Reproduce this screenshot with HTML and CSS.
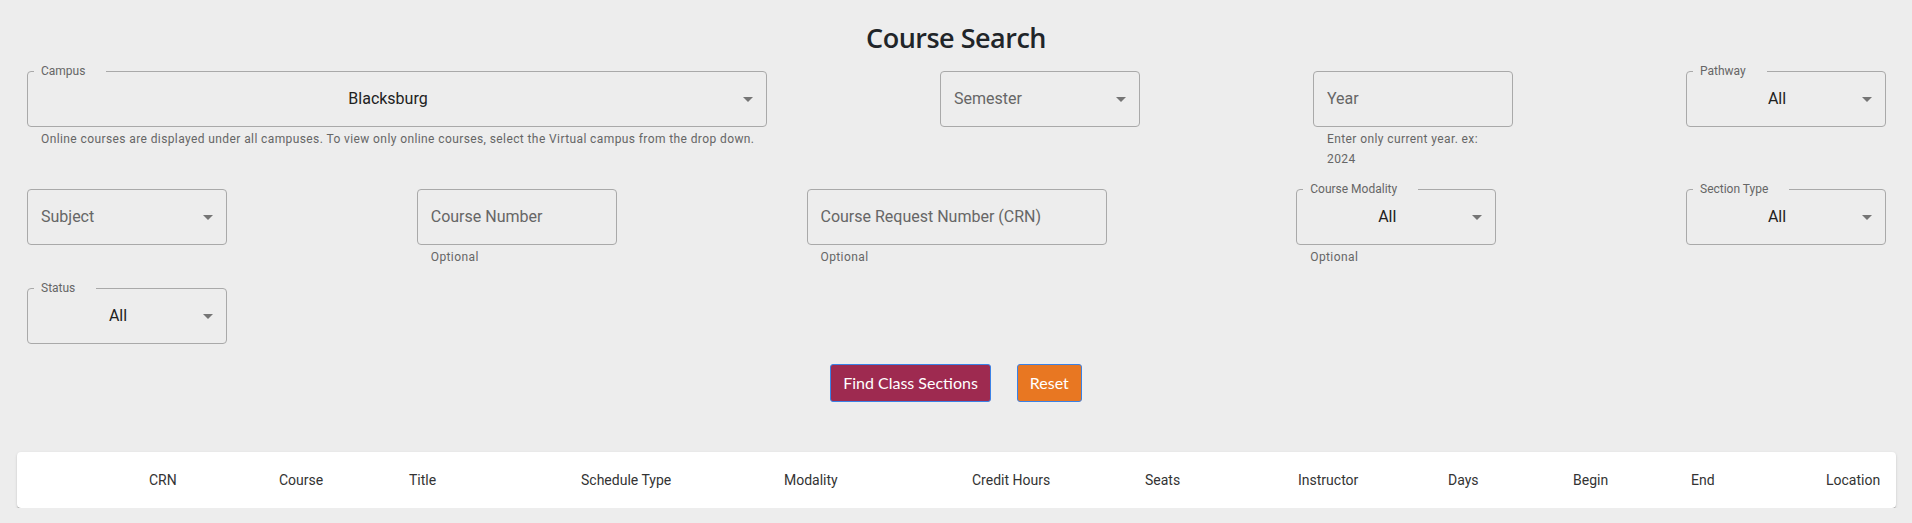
FILE: index.html
```html
<!DOCTYPE html>
<html lang="en">
<head>
<meta charset="utf-8">
<title>Course Search</title>
<link rel="stylesheet" href="styles.css">
</head>
<body>
<main class="page">
  <h1 class="title">Course Search</h1>

  <section class="form">
    <div class="row">
      <div class="field w-campus">
        <div class="box">
          <span class="label">Campus</span>
          <span class="value center">Blacksburg</span>
          <svg class="caret" width="10" height="5" viewBox="0 0 10 5"><path d="M0 0L5 5L10 0Z"/></svg>
        </div>
        <div class="hint">Online courses are displayed under all campuses. To view only online courses, select the Virtual campus from the drop down.</div>
      </div>
      <div class="field">
        <div class="box">
          <span class="value placeholder">Semester</span>
          <svg class="caret" width="10" height="5" viewBox="0 0 10 5"><path d="M0 0L5 5L10 0Z"/></svg>
        </div>
      </div>
      <div class="field">
        <div class="box">
          <span class="value placeholder">Year</span>
        </div>
        <div class="hint hint-narrow">Enter only current year. ex: 2024</div>
      </div>
      <div class="field">
        <div class="box">
          <span class="label">Pathway</span>
          <span class="value center">All</span>
          <svg class="caret" width="10" height="5" viewBox="0 0 10 5"><path d="M0 0L5 5L10 0Z"/></svg>
        </div>
      </div>
    </div>

    <div class="row">
      <div class="field">
        <div class="box">
          <span class="value placeholder">Subject</span>
          <svg class="caret" width="10" height="5" viewBox="0 0 10 5"><path d="M0 0L5 5L10 0Z"/></svg>
        </div>
      </div>
      <div class="field">
        <div class="box">
          <span class="value placeholder">Course Number</span>
        </div>
        <div class="hint">Optional</div>
      </div>
      <div class="field w-crn">
        <div class="box">
          <span class="value placeholder">Course Request Number (CRN)</span>
        </div>
        <div class="hint">Optional</div>
      </div>
      <div class="field">
        <div class="box">
          <span class="label">Course Modality</span>
          <span class="value center">All</span>
          <svg class="caret" width="10" height="5" viewBox="0 0 10 5"><path d="M0 0L5 5L10 0Z"/></svg>
        </div>
        <div class="hint">Optional</div>
      </div>
      <div class="field">
        <div class="box">
          <span class="label">Section Type</span>
          <span class="value center">All</span>
          <svg class="caret" width="10" height="5" viewBox="0 0 10 5"><path d="M0 0L5 5L10 0Z"/></svg>
        </div>
      </div>
    </div>

    <div class="row row-last">
      <div class="field">
        <div class="box">
          <span class="label">Status</span>
          <span class="value center">All</span>
          <svg class="caret" width="10" height="5" viewBox="0 0 10 5"><path d="M0 0L5 5L10 0Z"/></svg>
        </div>
      </div>
    </div>
  </section>

  <div class="actions">
    <button class="btn btn-find" type="button">Find Class Sections</button>
    <button class="btn btn-reset" type="button">Reset</button>
  </div>

  <section class="card">
    <div class="thead">
      <span></span>
      <span>CRN</span>
      <span>Course</span>
      <span>Title</span>
      <span>Schedule Type</span>
      <span>Modality</span>
      <span>Credit Hours</span>
      <span>Seats</span>
      <span>Instructor</span>
      <span>Days</span>
      <span>Begin</span>
      <span>End</span>
      <span>Location</span>
    </div>
  </section>
</main>
</body>
</html>
```

FILE: styles.css
```css
* { box-sizing: border-box; }

html, body {
  margin: 0;
  padding: 0;
  background: #ededed;
}

body {
  font-family: Roboto, "Liberation Sans", Arial, sans-serif;
  color: rgba(0, 0, 0, 0.87);
}

.page {
  padding-top: 20px;
}

.title {
  margin: 0;
  height: 36px;
  line-height: 36px;
  text-align: center;
  font-family: "Open Sans", "Noto Sans", sans-serif;
  font-weight: 600;
  font-size: 27px;
  letter-spacing: -0.5px;
  color: #212529;
}

.form {
  padding: 0 26px 0 27px;
  margin-top: 15px;
  display: flex;
  flex-direction: column;
  gap: 20px;
}

.row {
  display: flex;
  justify-content: space-between;
  align-items: flex-start;
}

.row-last { margin-top: 1px; }

.field {
  width: 200px;
  flex: none;
}

.w-campus { width: 740px; }
.w-crn { width: 300px; }

.box {
  position: relative;
  height: 56px;
  border: 1px solid #a9a9a9;
  border-radius: 4px;
  display: flex;
  align-items: center;
  padding: 0 13px;
  gap: 8px;
}

.label {
  position: absolute;
  top: -8px;
  left: 6px;
  padding: 0 21px 0 7px;
  font-size: 12px;
  line-height: 14px;
  color: #666;
  background: #ededed;
  white-space: nowrap;
}

.value {
  flex: 1;
  font-size: 16px;
  line-height: 24px;
  white-space: nowrap;
  overflow: hidden;
}

.value.center {
  text-align: center;
  color: #212121;
}

.value.placeholder {
  color: #666;
}

.caret {
  flex: none;
  fill: #757575;
}

.hint {
  padding: 2px 4px 0 14px;
  font-size: 12px;
  line-height: 20px;
  letter-spacing: 0.4px;
  color: #666;
}

.hint-narrow {
  padding-right: 14px;
}

.actions {
  margin-top: 20px;
  display: flex;
  justify-content: center;
  gap: 26px;
}

.btn {
  font-family: Lato, "Open Sans", sans-serif;
  font-size: 16px;
  line-height: 24px;
  padding: 6px 12px;
  border: 1px solid #3b82e6;
  border-radius: 3px;
  color: #fff;
  cursor: pointer;
}

.btn-find { background: #9e2a50; }
.btn-reset { background: #e87722; }

.card {
  margin: 50px 16px 0 17px;
  background: #fff;
  border-radius: 4px;
  box-shadow: 0 2px 1px -1px rgba(0, 0, 0, 0.3), 0 1px 1px 0 rgba(0, 0, 0, 0.14), 0 1px 3px 0 rgba(0, 0, 0, 0.12);
}

.thead {
  height: 56px;
  display: grid;
  grid-template-columns: 132px 130px 130px 172px 203px 188px 173px 153px 150px 125px 118px 135px 1fr;
  align-items: center;
  font-size: 14px;
  color: #333;
}

.thead span {
  white-space: nowrap;
}
```
